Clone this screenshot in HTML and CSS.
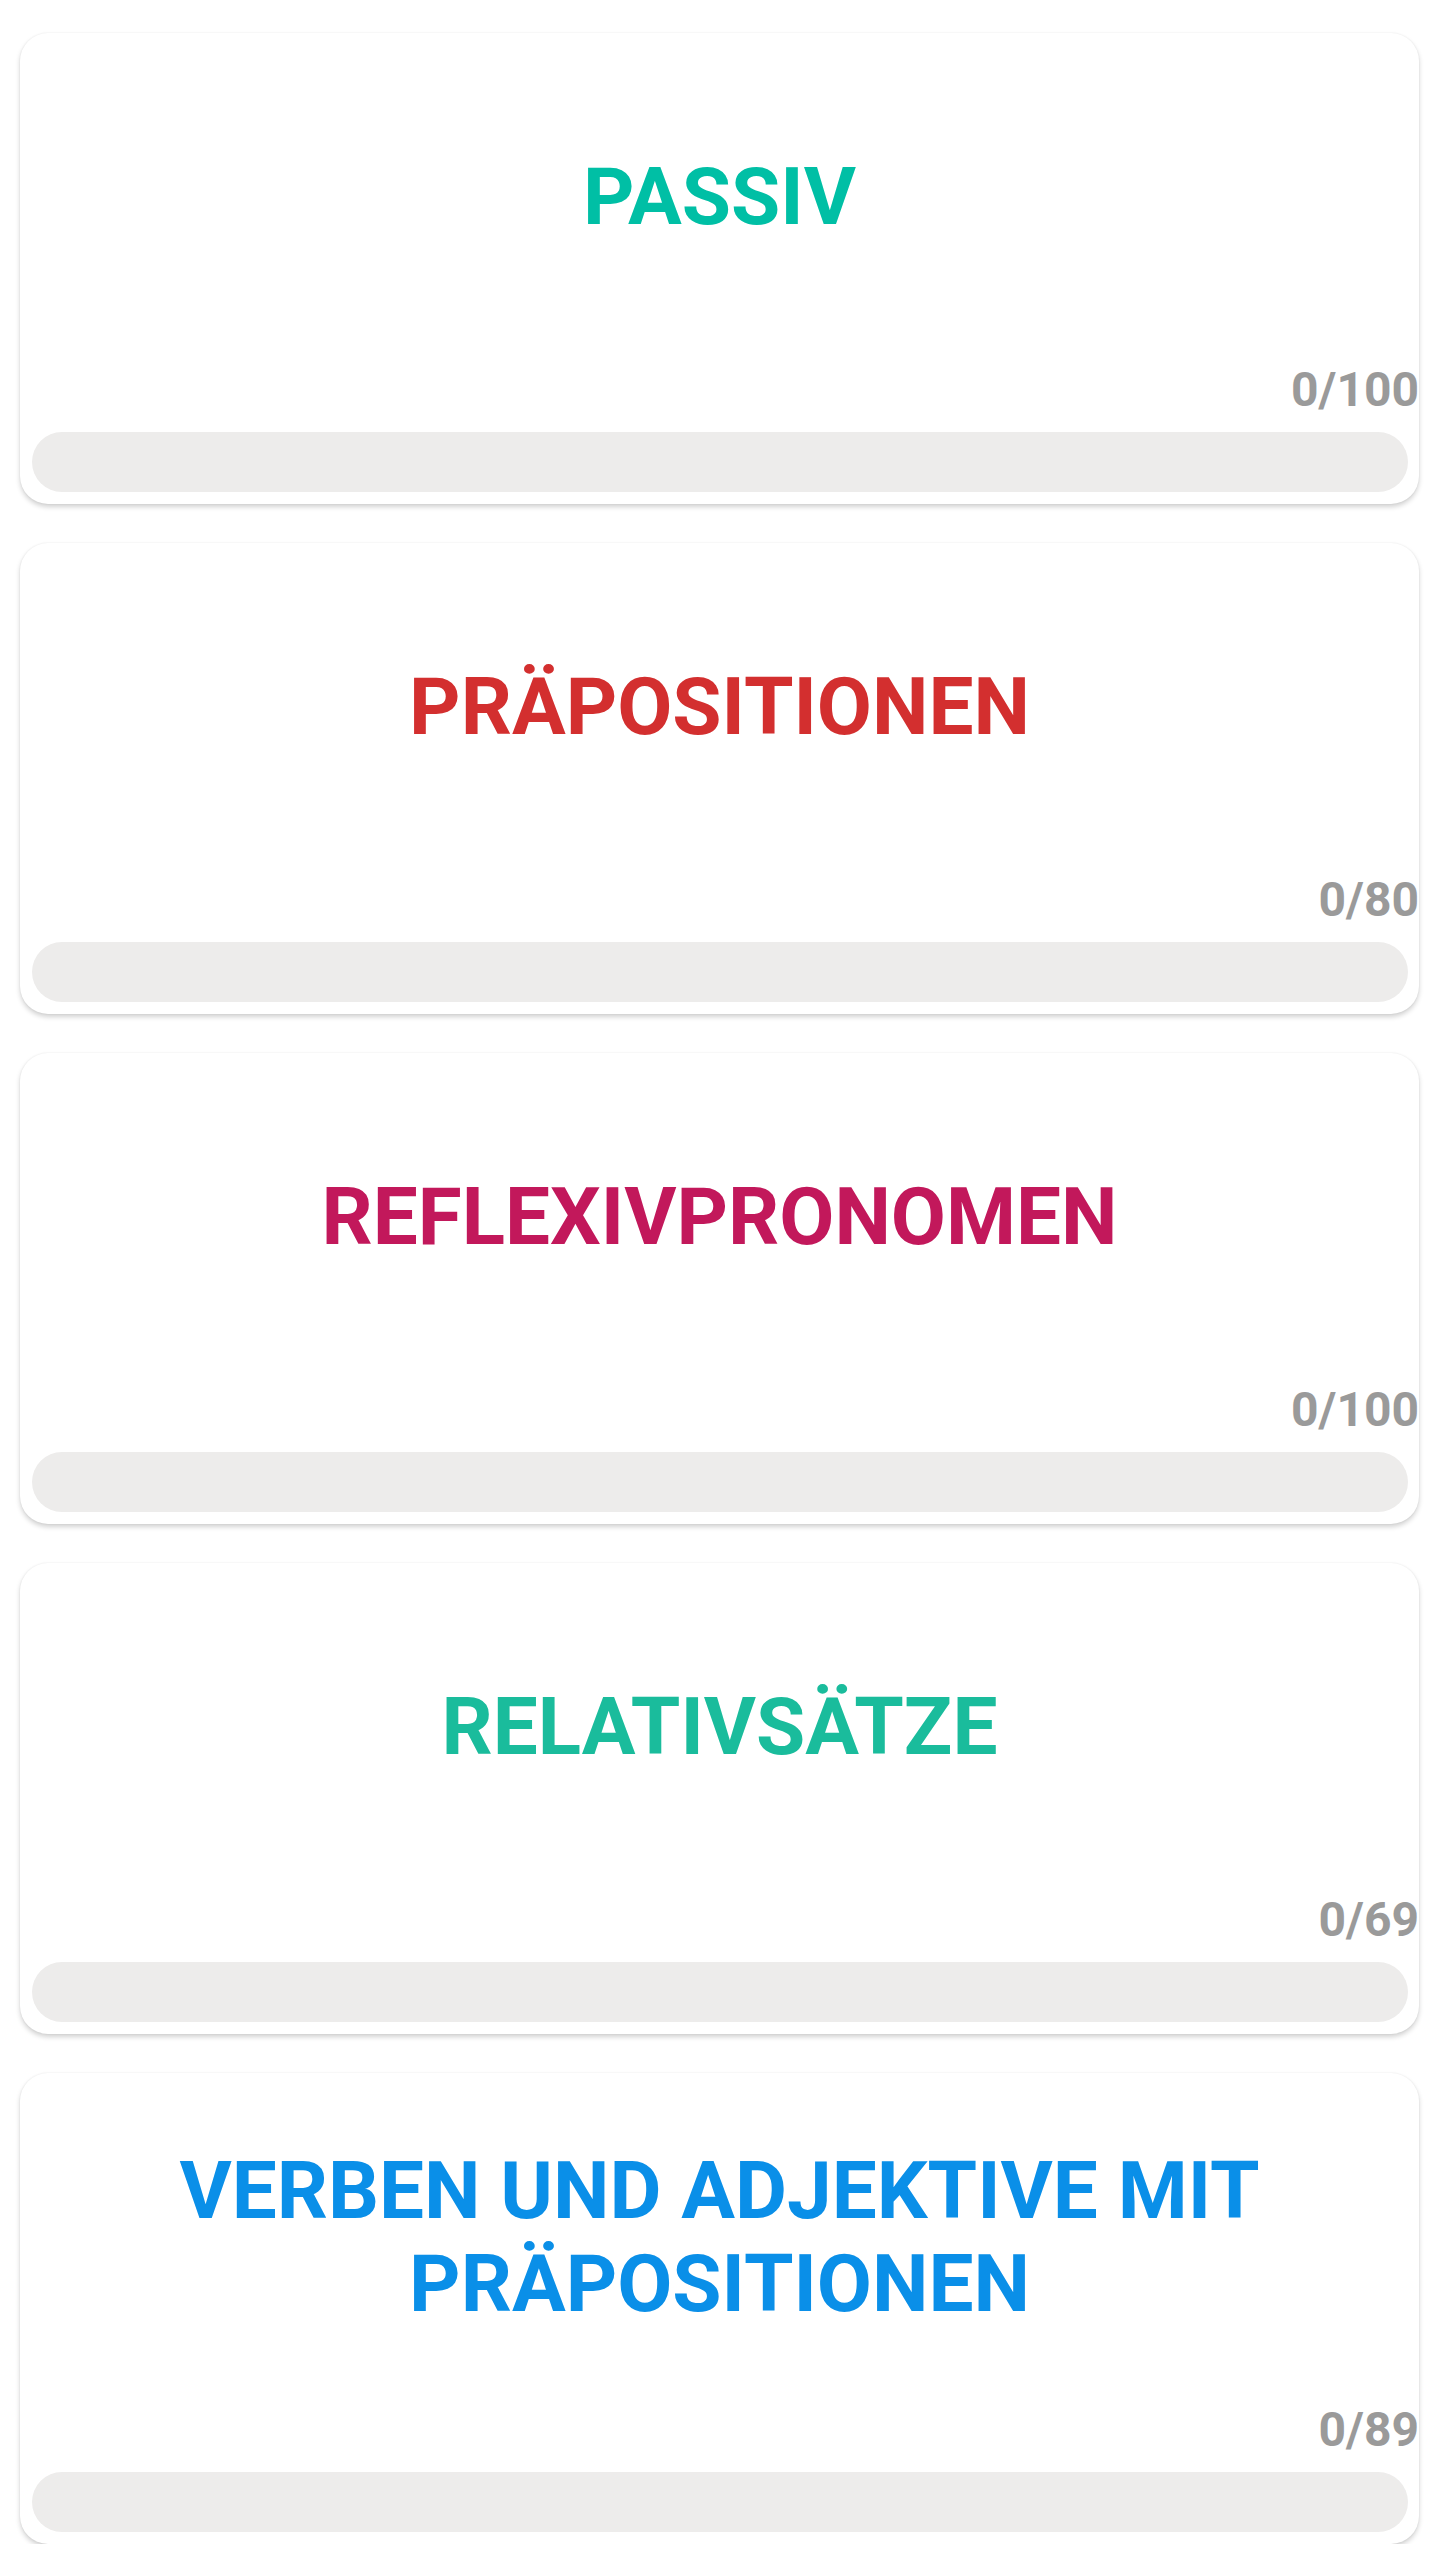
FILE: index.html
```html
<!DOCTYPE html>
<html lang="de">
<head>
    <meta charset="UTF-8">
    <meta name="viewport" content="width=device-width, initial-scale=1.0">
    <title>Grammatik</title>
    <link rel="stylesheet" href="styles.css">
</head>
<body>

    <div class="list">
        <div class="card">
            <div class="title-area"><h2 class="title passiv">PASSIV</h2></div>
            <div class="count">0/100</div>
            <div class="bar"></div>
        </div>

        <div class="card">
            <div class="title-area"><h2 class="title praep">PRÄPOSITIONEN</h2></div>
            <div class="count">0/80</div>
            <div class="bar"></div>
        </div>

        <div class="card">
            <div class="title-area"><h2 class="title reflexiv">REFLEXIVPRONOMEN</h2></div>
            <div class="count">0/100</div>
            <div class="bar"></div>
        </div>

        <div class="card">
            <div class="title-area"><h2 class="title relativ">RELATIVSÄTZE</h2></div>
            <div class="count">0/69</div>
            <div class="bar"></div>
        </div>

        <div class="card">
            <div class="title-area"><h2 class="title verben">VERBEN UND ADJEKTIVE MIT PRÄPOSITIONEN</h2></div>
            <div class="count">0/89</div>
            <div class="bar"></div>
        </div>
    </div>

</body>
</html>
```

FILE: styles.css
```css
body {
    margin: 0;
    background-color: #fff;
    font-family: Roboto, "Liberation Sans", sans-serif;
}
.list {
    display: flex;
    flex-direction: column;
    gap: 39px;
    padding: 33px 21px 0 20px;
}
.card {
    height: 471px;
    display: flex;
    flex-direction: column;
    background-color: #fff;
    border-radius: 28px;
    box-shadow: 0 3px 5px rgba(0, 0, 0, 0.18), 0 0 2px rgba(0, 0, 0, 0.07);
}
.title-area {
    height: 329px;
    display: flex;
    align-items: center;
    justify-content: center;
    padding: 0 130px;
}
.title {
    margin: 0;
    font-size: 80px;
    font-weight: 700;
    line-height: 93px;
    text-align: center;
}
.passiv { color: #00bfa5; }
.praep { color: #d32f2f; }
.reflexiv { color: #c2185b; }
.relativ { color: #1abc9c; }
.verben { color: #0a8fe8; }
.count {
    text-align: right;
    font-size: 48px;
    font-weight: 700;
    color: #9a9a9a;
    line-height: 56px;
}
.bar {
    height: 60px;
    margin: 14px 11px 12px 12px;
    border-radius: 30px;
    background-color: #edeceb;
}
```
